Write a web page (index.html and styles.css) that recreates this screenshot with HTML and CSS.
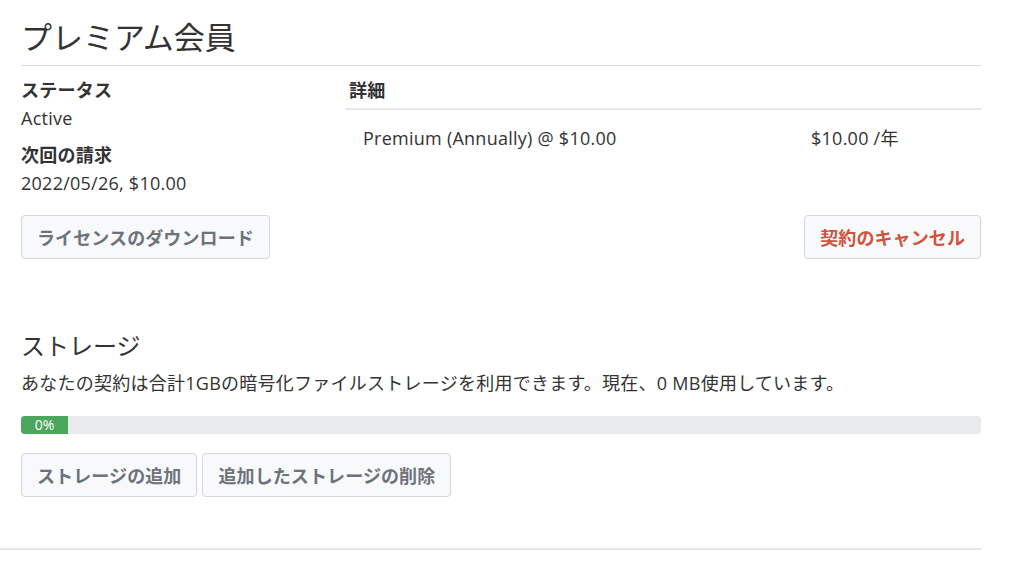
FILE: index.html
```html
<!DOCTYPE html>
<html lang="ja">
<head>
<meta charset="utf-8">
<link rel="stylesheet" href="styles.css">
</head>
<body>
<div class="page">
  <section class="plan">
    <h1 class="title">プレミアム会員</h1>
    <div class="plan-grid">
      <div class="status">
        <div class="label">ステータス</div>
        <div class="value">Active</div>
        <div class="label label-2">次回の請求</div>
        <div class="value">2022/05/26, $10.00</div>
      </div>
      <div class="details">
        <div class="details-head">詳細</div>
        <div class="details-row">
          <span class="item">Premium (Annually) @ $10.00</span>
          <span class="price">$10.00 /年</span>
        </div>
      </div>
    </div>
    <div class="actions">
      <button class="btn">ライセンスのダウンロード</button>
      <button class="btn btn-danger">契約のキャンセル</button>
    </div>
  </section>
  <section class="storage">
    <h2 class="subtitle">ストレージ</h2>
    <p class="desc">あなたの契約は合計1GBの暗号化ファイルストレージを利用できます。現在、0 MB使用しています。</p>
    <div class="progress"><div class="progress-bar" style="width:47px">0%</div></div>
    <div class="storage-actions">
      <button class="btn">ストレージの追加</button>
      <button class="btn">追加したストレージの削除</button>
    </div>
  </section>
  <hr class="bottom-rule">
</div>
</body>
</html>
```
FILE: styles.css
```css
* { box-sizing: border-box; }
html, body { margin: 0; padding: 0; background: #fff; }
body {
  font-family: "Open Sans", "Noto Sans CJK JP", sans-serif;
  color: #333;
  font-size: 18px;
  letter-spacing: 0.25px;
}
.page { width: 981px; }
.plan, .storage { margin-left: 21px; }
.title {
  margin: 0;
  padding-top: 17px;
  font-size: 31px;
  font-weight: 400;
  line-height: 40px;
  padding-bottom: 8px;
  letter-spacing: 0;
  border-bottom: 1px solid #dcdcdc;
}
.plan-grid { display: flex; padding-top: 10px; }
.status { width: 324px; }
.label { font-weight: 700; line-height: 28px; }
.label-2 { margin-top: 9px; }
.value { line-height: 28px; }
.details { flex: 1; }
.details-head {
  font-weight: 700;
  line-height: 28px;
  padding-left: 4px;
  padding-bottom: 4px;
  border-bottom: 2px solid #e6e6ec;
}
.details-row { display: flex; padding: 14px 0 0 18px; line-height: 28px; }
.item { width: 448px; }
.actions {
  display: flex;
  justify-content: space-between;
  margin-top: 18px;
}
.btn {
  font-family: "Noto Sans CJK JP", "Open Sans", sans-serif;
  font-size: 18px;
  font-weight: 700;
  letter-spacing: 0.1px;
  color: #6c737a;
  background: #f8f9fa;
  border: 1px solid #d3d6da;
  border-radius: 4px;
  height: 44px;
  padding: 0 15px;
  line-height: 1;
}
.btn-danger { color: #d0533d; }
.storage { margin-top: 71px; }
.subtitle {
  margin: 0;
  font-size: 24px;
  font-weight: 400;
  line-height: 32px;
  letter-spacing: 0;
}
.desc { margin: 7px 0 0; line-height: 28px; }
.progress {
  margin-top: 19px;
  height: 18px;
  background: #e9eaee;
  border-radius: 4px;
  overflow: hidden;
}
.progress-bar {
  height: 100%;
  background: #4ba75e;
  color: #fff;
  font-size: 14px;
  letter-spacing: 0;
  line-height: 18px;
  text-align: center;
}
.storage-actions { display: flex; gap: 5px; margin-top: 19px; }
.bottom-rule {
  margin: 51px 0 0;
  border: 0;
  border-top: 2px solid #e6e6e6;
}
```
